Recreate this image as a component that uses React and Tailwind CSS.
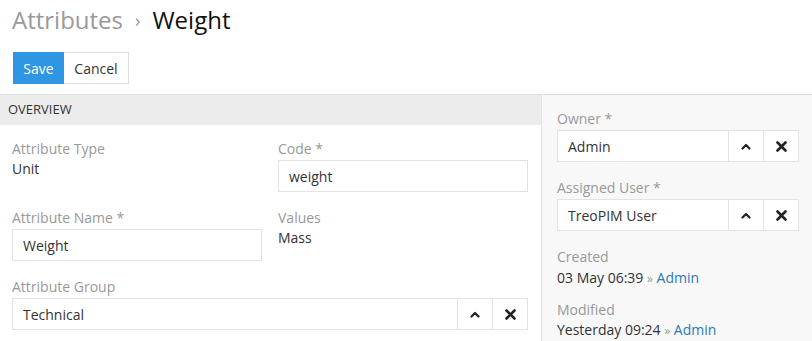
import React from 'react';

const ChevronUp = () => (
  <svg width="10" height="7" viewBox="0 0 10 7" fill="none">
    <path d="M1.5 5.5 L5 2 L8.5 5.5" stroke="#222" strokeWidth="2.2" strokeLinecap="round" strokeLinejoin="round" />
  </svg>
);

const Cross = () => (
  <svg width="11" height="11" viewBox="0 0 11 11" fill="none">
    <path d="M1.5 1.5 L9.5 9.5 M9.5 1.5 L1.5 9.5" stroke="#222" strokeWidth="2.6" strokeLinecap="round" />
  </svg>
);

const Label = ({ children }) => (
  <div className="text-[14px] leading-[20px] text-[#999]">{children}</div>
);

const TextInput = ({ value }) => (
  <div className="h-[32px] border border-[#e3e3e3] bg-white px-[10px] flex items-center text-[14px] text-[#333]">
    {value}
  </div>
);

const LinkInput = ({ value }) => (
  <div className="h-[32px] border border-[#e3e3e3] bg-white flex text-[14px] text-[#333]">
    <div className="flex-1 flex items-center px-[10px]">{value}</div>
    <div className="w-[35px] border-l border-[#e3e3e3] flex items-center justify-center"><ChevronUp /></div>
    <div className="w-[35px] border-l border-[#e3e3e3] flex items-center justify-center"><Cross /></div>
  </div>
);

const App = () => {
  return (
    <div className="w-[812px] h-[341px] overflow-hidden bg-white" style={{ fontFamily: '"Open Sans", "Liberation Sans", sans-serif' }}>
      {/* Header */}
      <div className="pl-[12px] pt-[4px] h-[52px] text-[24px] leading-[32px]">
        <span className="text-[#999]">Attributes</span>
        <span className="text-[#999] mx-[12px] text-[18px] relative top-[-2px]">›</span>
        <span className="text-[#111]">Weight</span>
      </div>
      <div className="pl-[13px] flex h-[42px]">
        <button className="h-[32px] w-[51px] bg-[#2f96e4] text-white text-[14px]">Save</button>
        <button className="h-[32px] w-[65px] bg-white border border-[#ddd] border-l-0 text-[#333] text-[14px]">Cancel</button>
      </div>

      <div className="flex border-t border-[#e0e0e0]">
        {/* Main panel */}
        <div className="w-[541px] shrink-0">
          <div className="h-[30px] bg-[#ececec] flex items-center pl-[8px] text-[13px] text-[#333]">OVERVIEW</div>
          <div className="pl-[12px] pr-[13px] pt-[14px] flex flex-col gap-[16px]">
            <div className="grid grid-cols-2 gap-x-[16px]">
              <div>
                <Label>Attribute Type</Label>
                <div className="text-[14px] leading-[20px] text-[#333]">Unit</div>
              </div>
              <div>
                <Label>Code *</Label>
                <div className="mt-[1px]"><TextInput value="weight" /></div>
              </div>
            </div>
            <div className="grid grid-cols-2 gap-x-[16px]">
              <div>
                <Label>Attribute Name *</Label>
                <div className="mt-[1px]"><TextInput value="Weight" /></div>
              </div>
              <div>
                <Label>Values</Label>
                <div className="text-[14px] leading-[20px] text-[#333]">Mass</div>
              </div>
            </div>
            <div>
              <Label>Attribute Group</Label>
              <div className="mt-[1px]"><LinkInput value="Technical" /></div>
            </div>
          </div>
        </div>

        {/* Side panel */}
        <div className="flex-1 bg-[#f8f8f8] border-l border-[#e3e3e3] pl-[15px] pr-[13px] pt-[14px] h-[260px]">
          <Label>Owner *</Label>
          <div className="mt-[1px]"><LinkInput value="Admin" /></div>
          <div className="mt-[16px]">
            <Label>Assigned User *</Label>
            <div className="mt-[1px]"><LinkInput value="TreoPIM User" /></div>
          </div>
          <div className="mt-[16px]">
            <Label>Created</Label>
            <div className="text-[14px] leading-[22px] text-[#333]">
              03 May 06:39 <span className="text-[#999] text-[12px]">»</span> <span className="text-[#2a7ab9]">Admin</span>
            </div>
          </div>
          <div className="mt-[10px]">
            <Label>Modified</Label>
            <div className="text-[14px] leading-[20px] text-[#333]">
              Yesterday 09:24 <span className="text-[#999] text-[12px]">»</span> <span className="text-[#2a7ab9]">Admin</span>
            </div>
          </div>
        </div>
      </div>
    </div>
  );
};

export default App;
